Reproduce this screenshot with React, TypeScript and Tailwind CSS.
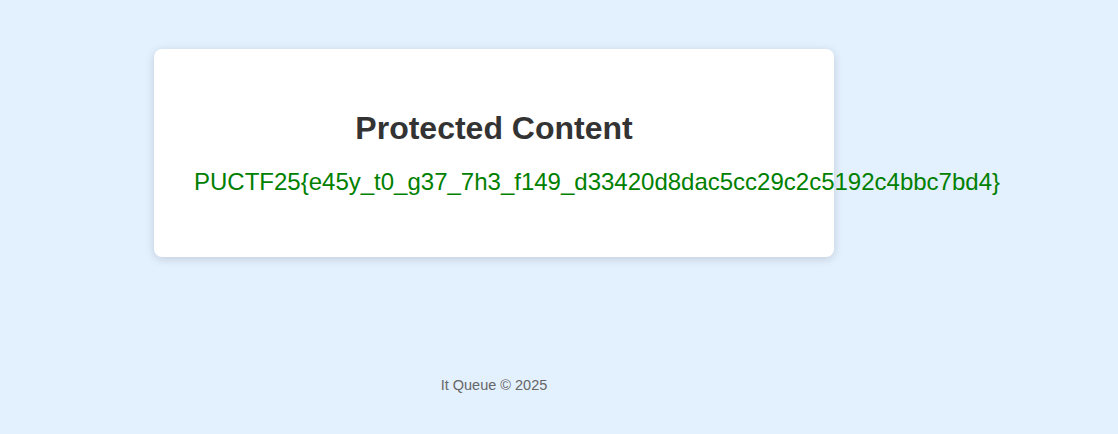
import React from "react";

export default function App() {
  return (
    <div
      className="min-h-[434px] w-full bg-[#e3f0fe] pt-[49px]"
      style={{ fontFamily: '"Liberation Sans", Arial, sans-serif' }}
    >
      <div className="ml-[154px] w-[680px]">
        <div className="h-[208px] rounded-lg bg-white px-10 pt-[61px] shadow-[0_2px_10px_rgba(0,0,0,0.15)]">
          <h1 className="text-center text-[32px] font-bold leading-[37px] text-[#333333]">
            Protected Content
          </h1>
          <p className="mt-[21px] whitespace-nowrap text-[24px] leading-[28px] text-[#008000]">
            PUCTF25{"{"}e45y_t0_g37_7h3_f149_d33420d8dac5cc29c2c5192c4bbc7bd4{"}"}
          </p>
        </div>
        <footer className="mt-[120px] text-center text-[14.5px] leading-[16px] text-[#666666]">
          It Queue © 2025
        </footer>
      </div>
    </div>
  );
}
